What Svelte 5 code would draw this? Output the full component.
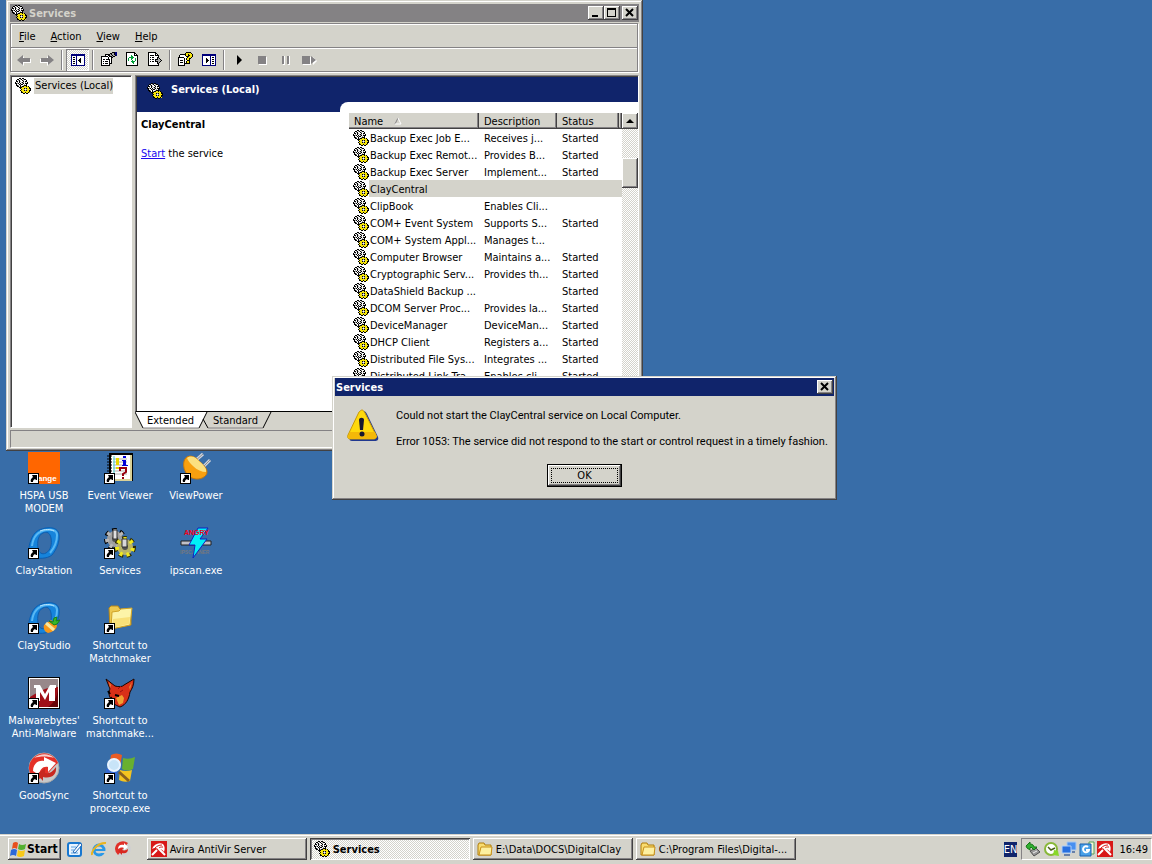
<script>
  const services = [
    ['Backup Exec Job E...', 'Receives j...', 'Started'],
    ['Backup Exec Remot...', 'Provides B...', 'Started'],
    ['Backup Exec Server', 'Implement...', 'Started'],
    ['ClayCentral', '', ''],
    ['ClipBook', 'Enables Cli...', ''],
    ['COM+ Event System', 'Supports S...', 'Started'],
    ['COM+ System Appl...', 'Manages t...', ''],
    ['Computer Browser', 'Maintains a...', 'Started'],
    ['Cryptographic Serv...', 'Provides th...', 'Started'],
    ['DataShield Backup ...', '', 'Started'],
    ['DCOM Server Proc...', 'Provides la...', 'Started'],
    ['DeviceManager', 'DeviceMan...', 'Started'],
    ['DHCP Client', 'Registers a...', 'Started'],
    ['Distributed File Sys...', 'Integrates ...', 'Started'],
    ['Distributed Link Tra...', 'Enables cli...', 'Started'],
  ];

  const menus = ['File', 'Action', 'View', 'Help'];

  const tools = [
    'back', 'forward', '|', 'tree', '|', 'properties', 'refresh', 'export', '|',
    'help', 'pane', '|', 'play', 'stop', 'pause', 'restart',
  ];

  const shortcuts = [
    [
      ['orange', 'HSPA USB MODEM'],
      ['claystation', 'ClayStation'],
      ['claystudio', 'ClayStudio'],
      ['malware', "Malwarebytes' Anti-Malware"],
      ['goodsync', 'GoodSync'],
    ],
    [
      ['events', 'Event Viewer'],
      ['gears', 'Services'],
      ['folder', 'Shortcut to Matchmaker'],
      ['fox', 'Shortcut to matchmake...'],
      ['procexp', 'Shortcut to procexp.exe'],
    ],
    [
      ['plug', 'ViewPower'],
      ['ipscan', 'ipscan.exe'],
    ],
  ];

  const tasks = [
    ['avira', 'Avira AntiVir Server'],
    ['gear', 'Services'],
    ['smallfolder', 'E:\\Data\\DOCS\\DigitalClay'],
    ['smallfolder', 'C:\\Program Files\\Digital-...'],
  ];

  let selected = $state('ClayCentral');
  let dialogOpen = $state(true);

  const palette = { K: '#000', W: '#fff', G: '#a8a8a8', D: '#848284', Y: '#f4e40c', N: '#00007b', E: '#00a038' };

  const pixels = {
    gear: [
      '....KK.KK.......',
      '..KKWGKWGKK.....',
      '.KWGKWWKGWWK....',
      '.KKWKGWWKWKK....',
      'KWGWKWGKGWGWK...',
      'KKGKWKWGKWKKK...',
      '.KWWKGKKWGWK....',
      '.KKGWKWWGKKK....',
      '..KKWKGKKYYKYK..',
      '....KKKYYYYYYYK.',
      '.....KYYYKGKYYKK',
      '......KYYGWGYYYK',
      '.....KYYYKGKYYKK',
      '......KYYYYYYYK.',
      '......KKYYKYYKY.',
      '........KK.KK...',
    ],
    tree: [
      '................',
      '................',
      '.NNNNNNNNNNNNNN.',
      '.NNNNNNNNNNNNNN.',
      '.NWWWWNWWWWWWWN.',
      '.NWKKWNWWWWWWWN.',
      '.NWWWWNWWWKWWWN.',
      '.NWKKWNWWKKWWWN.',
      '.NWWWWNWKKKWWWN.',
      '.NWKKWNWWKKWWWN.',
      '.NWWWWNWWWKWWWN.',
      '.NWKKWNWWWWWWWN.',
      '.NWWWWNWWWWWWWN.',
      '.NNNNNNNNNNNNNN.',
    ],
    pane: [
      '................',
      '................',
      '.NNNNNNNNNNNNNN.',
      '.NNNNNNNNNNNNNN.',
      '.NWWWWWWWNWWWWN.',
      '.NWWWWWWWNWKKWN.',
      '.NWWWKWWWNWWWWN.',
      '.NWWWKKWWNWKKWN.',
      '.NWWWKKKWNWWWWN.',
      '.NWWWKKWWNWKKWN.',
      '.NWWWKWWWNWWWWN.',
      '.NWWWWWWWNWKKWN.',
      '.NWWWWWWWNWWWWN.',
      '.NNNNNNNNNNNNNN.',
    ],
    properties: [
      '...........KKKNN',
      '.........KKGGKNN',
      '....KKKKKGKGGKNN',
      '....KWWKKGGKGGKN',
      'KKKKKKKWKKKGKK..',
      'KWWWWWWKWWKK....',
      'KWWWWWWKWWK.....',
      'KWKKWKKKKWK.....',
      'KWWWWWWWKWK.....',
      'KWKWKKKWKWK.....',
      'KWWWWWWWKWK.....',
      'KWKWKKKWKKK.....',
      'KWWWWWWWK.......',
      'KKKKKKKKK.......',
    ],
    refresh: [
      '..KKKKKKKKK.....',
      '..KWWWWWWWKK....',
      '..KWWWWWWWKWK...',
      '..KWWWWEWWKKKK..',
      '..KWWWWEEWWWWK..',
      '..KWWEEEEEWWWK..',
      '..KWEWWEEWWEWK..',
      '..KWEWWEWWWEWK..',
      '..KWEWWWEWWEWK..',
      '..KWWWWEEEEWWK..',
      '..KWWWWWEEWWWK..',
      '..KWWWWWWEWWWK..',
      '..KWWWWWWWWWWK..',
      '..KKKKKKKKKKKK..',
    ],
    export: [
      '.KKKKKKKK.......',
      '.KWWWWWWKK......',
      '.KWWWWWWKWK.....',
      '.KWKKKKWKKKK....',
      '.KWWWWWWWWWK....',
      '.KWKWKKWWWKK....',
      '.KWWWWWWWWKGK...',
      '.KWKWKKWKKKGGK..',
      '.KWWWWWWKGGGGGK.',
      '.KWKWKKWKKKGGK..',
      '.KWWWWWWWWKGK...',
      '.KWWWWWWWWKK....',
      '.KWWWWWWWWWK....',
      '.KKKKKKKKKKK....',
    ],
    help: [
      '........KKKKK...',
      '.......KYYYYYK..',
      '..KKKKKKYYKYYYK.',
      '.KWWWWWKYYKKYYK.',
      '.KWWWWWWKKKYYYK.',
      'KKKKKKWWWKYYYK..',
      'KWWWWWKWKYYKK...',
      'KWWWWWKWKYYK....',
      'KWKKKWKWWKKK....',
      'KWWWWWKWKYYK....',
      'KWKKKWKWKYYK....',
      'KWWWWWKKKKKK....',
      'KWWWWWK.........',
      'KKKKKKK.........',
    ],
  };

  // one path per colour keeps the pixel icons small
  function layers(name) {
    const out = {};
    pixels[name].forEach((row, y) => {
      [...row].forEach((c, x) => {
        if (c !== '.') out[c] = (out[c] || '') + `M${x} ${y}h1v1h-1z`;
      });
    });
    return Object.entries(out);
  }
</script>

{#snippet small(name)}
  <svg class="small" viewBox="0 0 16 16" aria-hidden="true">
    {#if pixels[name]}
      <g shape-rendering="crispEdges">
        {#each layers(name) as [c, d]}
          <path {d} fill={palette[c]} />
        {/each}
      </g>
    {:else if name === 'back' || name === 'forward'}
      <g transform={name === 'forward' ? 'matrix(-1 0 0 1 16 0)' : undefined}>
        <path d="M3 9l5-5v3h7v4H8v3z" fill="#fff" />
        <path d="M1 8l6-5v3h7v4H7v3z" fill="#848284" />
      </g>
    {:else if name === 'play'}
      <path d="M5 3v10l5-5z" fill="#000" />
    {:else if name === 'stop'}
      <path d="M4 5h8v8H4z" fill="#fff" /><path d="M3 4h8v8H3z" fill="#848284" />
    {:else if name === 'pause'}
      <path d="M5 4h2v9H5zM10 4h2v9h-2z" fill="#fff" /><path d="M4 4h2v8H4zM9 4h2v8H9z" fill="#848284" />
    {:else if name === 'restart'}
      <path d="M2 5h8v8H2zM12 5v8l4-4z" fill="#fff" /><path d="M1 4h8v8H1zM10 4v8l5-4z" fill="#848284" />
    {:else if name === 'avira'}
      <path d="M0 0h16v16H0z" fill="#d81818" />
      <path d="M1 8C3 3 8 1 12 3c2 2 2 5 1 8-1-2-3-3-5-3s-3-2-7 0z" fill="#fff" />
      <path d="M7 7l7 7M1 14l5-5" stroke="#fff" stroke-width="2" fill="none" />
      <path d="M4 7c2-2 4-3 7-3M8 7c1-1 2-1 4-1" stroke="#d81818" fill="none" />
    {:else if name === 'smallfolder'}
      <path d="M1 4l1-2h5l1 2h6v10H1z" fill="#f8dc70" stroke="#b07c08" />
      <path d="M2 14l2-8h11l-1 8z" fill="#fdf0a0" stroke="#c89018" />
    {:else if name === 'flag'}
      <path d="M3 2q3-2 5 0l-1 6q-3-2-5 0z" fill="#e8501c" />
      <path d="M9 3q3 2 7 0l-1 5q-4 2-7 0z" fill="#54b030" />
      <path d="M1 9q3-2 6 0l-1 6q-3-2-6 0z" fill="#2c68d8" />
      <path d="M8 9q3 2 7 0l-1 6q-4 2-7 0z" fill="#f8c818" />
    {:else if name === 'desktop'}
      <rect x="1" y="2" width="13" height="13" rx="2" fill="#e8f4ff" stroke="#1878d0" stroke-width="2" />
      <path d="M4 6h5M4 9h3M4 12h7" stroke="#58a0e0" />
      <path d="M6 11l7-9 2 2-7 8z" fill="#f4faff" stroke="#2068b8" />
    {:else if name === 'ie'}
      <circle cx="8" cy="9" r="5" fill="none" stroke="#2898e8" stroke-width="3" />
      <path d="M4 9h9" stroke="#2898e8" stroke-width="2" />
      <path d="M10 10h5v2h-5z" fill="#d4d3cb" />
      <path d="M1 14C0 9 8 1 15 2" stroke="#e8b420" stroke-width="2" fill="none" />
    {:else if name === 'sync'}
      <circle cx="8" cy="8" r="8" fill="#d0d0d0" />
      <path d="M0 8a8 8 0 0 1 13-6L3 14a8 8 0 0 1-3-6z" fill="#e03028" />
      <path d="M3 8c0-4 3-5 6-4V2l4 4-4 3V7C6 6 5 7 3 8z" fill="#fff" />
      <path d="M13 8c0 4-3 5-6 4v2l-4-4 4-3v2c3 1 4 0 6-1z" fill="#d82820" />
    {:else if name === 'usb'}
      <path d="M5 10l6-3 4 4-6 4z" fill="#989898" stroke="#505050" />
      <path d="M8 12l4-2" stroke="#eee" />
      <path d="M1 5l4-4v2c3 0 4 2 4 3h3l-3 3-3-3-1 1v2L2 7z" fill="#30b030" stroke="#187818" />
    {:else if name === 'clock'}
      <circle cx="8" cy="8" r="6" fill="#fff" stroke="#88b838" stroke-width="2" />
      <path d="M5 6l3 3 4-2" stroke="#486018" fill="none" stroke-width="1.5" />
      <path d="M11 9l4 1 1 5-6-1z" fill="#88d828" />
    {:else if name === 'network'}
      <path d="M6 1h9v8H6z" fill="#4890f0" stroke="#a8c8f0" /><path d="M1 5h9v7H1z" fill="#2870e0" stroke="#b0d0f8" />
      <path d="M3 14h6M11 11h3" stroke="#6880a8" stroke-width="2" />
    {:else if name === 'update'}
      <path d="M10 1h5v12h-5z" fill="#f4f4d8" stroke="#58a058" /><path d="M1 3h11v12H1z" fill="#48a0e8" stroke="#1860b0" />
      <path d="M9 6a3 3 0 1 0 1 3H7" fill="none" stroke="#fff" stroke-width="2" />
    {/if}
  </svg>
{/snippet}

{#snippet ring()}
  <path
    d="M14 2C22-1 30 1 31 7c1 7-2 15-7 21-5 4-14 4-19 2C0 27 0 20 3 13 5 7 9 3 14 2zM15 6c-5 2-6 9-5 15 1 5 4 7 8 5 5-3 6-9 5-15-1-5-4-7-8-5z"
    fill="#1684dc" fill-rule="evenodd" stroke="#0c5eb0" />
  <path d="M4 19C5 10 10 4 19 3c6-1 10 1 10 5 0 6-2 12-7 18" stroke="#58b8f4" stroke-width="2" fill="none" />
  <path d="M12 4c5-2 10-2 14 0" stroke="#b8e4fc" fill="none" />
{/snippet}

{#snippet big(name)}
  <svg class="big" viewBox="0 0 32 32" aria-hidden="true">
    {#if name === 'orange'}
      <path d="M0 0h32v32H0z" fill="#ff6600" />
      <text x="10" y="29" class="orange-mark">ange</text>
    {:else if name === 'claystation'}
      {@render ring()}
    {:else if name === 'claystudio'}
      {@render ring()}
      <path d="M16 23l7-5 6 5c0 4-4 7-9 8-3-1-5-4-4-8z" fill="#f89818" />
      <path d="M18 21l8 7" stroke="#f8e8a0" stroke-width="3" />
      <path d="M21 19l4 1 1-4 3-1-1 4 4-1-3 4-3 1z" fill="#38b828" stroke="#188018" />
    {:else if name === 'malware'}
      <path d="M0 0h32v32H0z" fill="#000" />
      <path d="M1 1h30v30H1z" fill="#fff" />
      <path d="M2 2h28v28H2z" fill="#a01018" />
      <path d="M2 2h28v8C18 10 12 14 2 20z" fill="#98888a" />
      <path d="M20 30c6-4 9-10 10-18v18z" fill="#680408" />
      <path d="M6 8h6l5 9 5-9h6v3h-1v13h-6v-9l-4 8-5-8v9H8V11H6z" fill="#fff" />
    {:else if name === 'goodsync'}
      <circle cx="16" cy="16" r="15" fill="#c8c8c8" stroke="#a8a8a8" />
      <path d="M1 17A15 15 0 0 1 30 11C24 15 20 25 8 28A15 15 0 0 1 1 17z" fill="#e43028" />
      <path d="M6 6c6-5 15-5 20 0-6-2-14-2-20 0z" fill="#f8d0cc" />
      <path d="M5 19c0-7 5-11 11-10V5l12 6-8 9v-5c-5-1-8 2-9 8z" fill="#fff" />
      <path d="M28 15c1 8-5 12-13 10v4l-6-7 8-6v5c5 1 8-2 11-6z" fill="#c82820" />
    {:else if name === 'events'}
      <path d="M6 2h22v26H6z" fill="#fff" stroke="#000" stroke-width="2" />
      <path d="M27 3v25H8" stroke="#d8d098" stroke-width="2" fill="none" />
      <path d="M9 7h14M9 10h14M9 13h14M9 16h14M9 19h14M9 22h14" stroke="#b0b0b0" />
      <path d="M10 4v22" stroke="#40d0d0" />
      <path d="M3 4h5M3 7h5M3 10h5M3 13h5M3 16h5M3 19h5" stroke="#000" />
      <path d="M12 6h3v7h-3zM12 15h3v2h-3z" fill="#e8d800" />
      <path d="M19 4h3v2h-3zM18 8h4v5h2v1h-6v-1h1v-4h-1z" fill="#0000d8" />
      <path d="M16 19v-3h6v4l-3 2v2M19 25v2" stroke="#980010" stroke-width="2" fill="none" />
    {:else if name === 'gears'}
      <circle cx="11" cy="12" r="8" fill="none" stroke="#000" stroke-width="6" stroke-dasharray="4 3" />
      <circle cx="11" cy="12" r="8" fill="#a0a0a0" stroke="#b8b8b8" stroke-width="4" stroke-dasharray="3 4" stroke-dashoffset="-1" />
      <circle cx="11" cy="12" r="3" fill="#505050" />
      <path d="M9 3h4v9H9z" fill="#e0e0e0" stroke="#303030" />
      <circle cx="21" cy="20" r="8" fill="none" stroke="#302c00" stroke-width="6" stroke-dasharray="4 3" />
      <circle cx="21" cy="20" r="8" fill="#b8b468" stroke="#f0e820" stroke-width="4" stroke-dasharray="3 4" stroke-dashoffset="-1" />
      <circle cx="21" cy="20" r="3" fill="#505050" />
      <path d="M18 12h5v8h-5z" fill="#d8d8d8" stroke="#303030" />
    {:else if name === 'folder'}
      <path d="M5 6l2-2h7l2 3h9l2 2v14L6 27z" fill="#ecc850" stroke="#b88818" />
      <path d="M8 10l7-1 2-2 11-1-2 17-19 4z" fill="#fdf4a8" stroke="#d0a428" />
      <path d="M9 17l17-2-1 7-17 4z" fill="#f8e078" />
    {:else if name === 'fox'}
      <path d="M2 2l9 7c4 1 7 1 9-1l10-6c0 6-2 10-4 13-1 7-4 13-10 15-5-2-8-4-9-8-3-4-2-8-1-10z" fill="#d83018" stroke="#180400" />
      <path d="M28 5l-3 5 1 3zM5 5l1 6 1-3z" fill="#e88030" />
      <path d="M12 21l6-3 2 3-1 5-4 2z" fill="#f0a030" />
      <path d="M11 18l4 1M4 14l2 3M7 20l1 4" stroke="#000" stroke-width="2" />
      <path d="M14 12l3-3M16 15l3-2" stroke="#981010" />
    {:else if name === 'procexp'}
      <path d="M7 3q5-3 11 0l-2 12q-6-3-11 0z" fill="#e85c24" />
      <path d="M19 6q6 2 12-1l-2 12q-6 3-11 0z" fill="#68b030" />
      <path d="M2 17q6-2 12 0l-2 11q-5-3-11 0z" fill="#3468d0" />
      <path d="M16 18q6 2 12 0l-2 11q-6 2-11-1z" fill="#f4c420" />
      <path d="M15 20l10 9" stroke="#886020" stroke-width="3" />
      <circle cx="10" cy="13" r="6" fill="#c8e4f8" stroke="#e8f4ff" stroke-width="2" />
    {:else if name === 'plug'}
      <path d="M15 9l8-7M23 15l7-7" stroke="#d0d4dc" stroke-width="3" />
      <path d="M15 9l8-7M23 15l7-7" stroke="#888c94" />
      <path d="M5 7c3-5 10-3 14 2 6 5 10 10 7 14-4 5-11 5-16 2C4 21 2 12 5 7z" fill="#f8a010" stroke="#c87808" />
      <path d="M7 6c4-3 9-1 12 3 5 4 8 8 7 11-4 0-9-2-13-6-3-3-5-5-6-8z" fill="#fbe080" />
    {:else if name === 'ipscan'}
      <path d="M1 14h30v4H1z" fill="#c0c0c8" stroke="#202020" />
      <text x="0" y="27" class="scanner">IPSCANNER</text>
      <path d="M18 1h10l-8 11h7L13 31l2-13H9z" fill="#00f0f8" stroke="#1020c0" />
      <text x="4" y="8" class="angry">ANGRY</text>
    {/if}
    {#if name !== 'ipscan'}
      <path d="M0 21h11v11H0z" fill="#000" /><path d="M1 22h9v9H1z" fill="#fff" />
      <path d="M4 23h5v5H8l-1-1c-2 1-2 2-2 3H3c-1-2 0-3 2-5z" fill="#000" />
    {/if}
  </svg>
{/snippet}

{#snippet closeMark()}
  <svg class="mark" viewBox="0 0 12 10" aria-hidden="true">
    <path d="M2 1l7 7M9 1L2 8" stroke="#000" stroke-width="2" />
  </svg>
{/snippet}

<div class="screen">
  <main class="desktop">
    <div class="shortcuts">
      {#each shortcuts as column}
        <div class="column">
          {#each column as [icon, label]}
            <a class="shortcut" href="#{icon}">
              {@render big(icon)}
              <span>{label}</span>
            </a>
          {/each}
        </div>
      {/each}
    </div>

    <section class="window services" aria-label="Services">
      <header class="title inactive">
        {@render small('gear')}
        <h1>Services</h1>
        <button class="caption" aria-label="Minimize">
          <svg class="mark" viewBox="0 0 12 10" aria-hidden="true"><path d="M2 7h6v2H2z" /></svg>
        </button>
        <button class="caption" aria-label="Maximize">
          <svg class="mark" viewBox="0 0 12 10" aria-hidden="true"><path d="M1 0h9v9H1zM2 2v6h7V2z" fill-rule="evenodd" /></svg>
        </button>
        <button class="caption close" aria-label="Close">{@render closeMark()}</button>
      </header>

      <div class="bars">
        <nav class="menu">
          {#each menus as menu}
            <button><u>{menu[0]}</u>{menu.slice(1)}</button>
          {/each}
        </nav>
        <div class="toolbar">
          {#each tools as tool}
            {#if tool === '|'}
              <span class="separator"></span>
            {:else}
              <button class:pressed={tool === 'tree'} aria-label={tool}>{@render small(tool)}</button>
            {/if}
          {/each}
        </div>
      </div>

      <div class="panes">
        <div class="sunken tree">
          {@render small('gear')}
          <button>Services (Local)</button>
        </div>

        <div class="result">
          <div class="sunken view">
            <h2>{@render small('gear')} Services (Local)</h2>
            <div class="split">
              <div class="detail">
                <h3>{selected}</h3>
                <p><a href="#start">Start</a> the service</p>
              </div>
              <div class="list">
                <table>
                  <colgroup><col class="name" /><col class="description" /><col class="status" /><col /></colgroup>
                  <thead>
                    <tr>
                      <th>Name
                        <svg class="sort" viewBox="0 0 8 8" aria-hidden="true">
                          <path d="M4 1L1 7" stroke="#848284" /><path d="M4 1l3 6H1" stroke="#fff" fill="none" />
                        </svg>
                      </th>
                      <th>Description</th>
                      <th>Status</th>
                      <th class="rest"></th>
                    </tr>
                  </thead>
                  <tbody>
                    {#each services as [name, description, status]}
                      <tr class:selected={name === selected} onclick={() => (selected = name)}>
                        <td><span class="cell">{@render small('gear')}<span>{name}</span></span></td>
                        <td>{description}</td>
                        <td>{status}</td>
                        <td class="rest"></td>
                      </tr>
                    {/each}
                  </tbody>
                </table>
                <div class="scrollbar">
                  <button class="up" aria-label="Scroll up">
                    <svg viewBox="0 0 8 8" aria-hidden="true"><path d="M0 6h8L4 2z" /></svg>
                  </button>
                  <div class="thumb"></div>
                </div>
              </div>
            </div>
          </div>
          <div class="tabs">
            <svg viewBox="0 0 140 17" aria-hidden="true">
              <path d="M68 7l5 9h55l8-16H72z" fill="#d4d3cb" />
              <path d="M0 0l8 16h56l8-16z" fill="#fff" />
              <path d="M0 0l8 16M64 16l8-16M68 7l5 9M128 16l8-16" stroke="#000" fill="none" />
              <path d="M8 16h56M73 16h55" stroke="#848284" />
            </svg>
            <button>Extended</button>
            <button>Standard</button>
          </div>
        </div>
      </div>
      <footer class="statusbar"></footer>
    </section>

    {#if dialogOpen}
      <div class="window dialog" role="alertdialog" aria-label="Services">
        <header class="title">
          <h1>Services</h1>
          <button class="caption close" aria-label="Close" onclick={() => (dialogOpen = false)}>{@render closeMark()}</button>
        </header>
        <div class="message">
          <svg class="warning" viewBox="0 0 32 32" aria-hidden="true">
            <path d="M16 2c2 0 3 1 4 3l11 23c1 3-1 4-3 4H5c-2 0-3-1-2-3z" fill="#203890" />
            <path d="M15 1c1 0 2 1 3 3l11 22c1 2 0 4-2 4H3c-2 0-3-2-2-4L12 3c1-1 2-2 3-2z" fill="#ffd90c" stroke="#c89808" />
            <path d="M3 23h25l2 5-3 2H3l-2-2z" fill="#f4b808" />
            <path d="M12 11c0-3 5-3 5 0l-1 10h-3z" fill="#181830" />
            <circle cx="15" cy="25" r="2.500" fill="#181830" />
          </svg>
          <div>
            <p>Could not start the ClayCentral service on Local Computer.</p>
            <p>Error 1053: The service did not respond to the start or control request in a timely fashion.</p>
          </div>
        </div>
        <button class="ok" onclick={() => (dialogOpen = false)}><span>OK</span></button>
      </div>
    {/if}
  </main>

  <footer class="taskbar">
    <button class="start">{@render small('flag')}Start</button>
    <div class="quick">
      <button aria-label="Show desktop">{@render small('desktop')}</button>
      <button aria-label="Internet Explorer">{@render small('ie')}</button>
      <button aria-label="GoodSync">{@render small('sync')}</button>
    </div>
    <div class="tasks">
      {#each tasks as [icon, label]}
        <button class:active={label === 'Services'}>{@render small(icon)}<span>{label}</span></button>
      {/each}
    </div>
    <span class="language">EN</span>
    <div class="tray">
      {#each ['usb', 'clock', 'network', 'update', 'avira'] as icon}
        {@render small(icon)}
      {/each}
      <time>16:49</time>
    </div>
  </footer>
</div>

<style>
  :global(body) {
    --face: #d4d3cb;
    --shade: #848284;
    --dark: #424142;
    --navy: #10246b;
    --dither: repeating-conic-gradient(#fff 0 25%, var(--face) 0 50%) 0 0 / 2px 2px;
    margin: 0;
    color: #000;
    font: 11px/13px Tahoma, 'DejaVu Sans Condensed', sans-serif;
  }

  .screen {
    display: flex;
    flex-direction: column;
    min-height: 100vh;
    overflow: hidden;
  }

  .desktop {
    position: relative;
    flex: 1;
    background: #386da8;
  }

  h1,
  h2,
  h3,
  p {
    margin: 0;
    font-size: 11px;
  }

  button {
    margin: 0;
    padding: 0;
    border: 0;
    background: none;
    color: inherit;
    font: inherit;
  }

  .small {
    flex: none;
    width: 16px;
    height: 16px;
  }

  /* desktop shortcuts */
  .shortcuts {
    display: flex;
    padding: 452px 0 0 6px;
  }

  .column {
    width: 76px;
  }

  .shortcut {
    display: flex;
    flex-direction: column;
    align-items: center;
    gap: 5px;
    height: 75px;
    color: #fff;
    text-align: center;
    text-decoration: none;
  }

  .big {
    flex: none;
    width: 32px;
    height: 32px;
  }

  .orange-mark {
    fill: #fff;
    font: bold 8px 'Liberation Sans', sans-serif;
  }

  .angry,
  .scanner {
    fill: #f00018;
    font: bold 7px 'Liberation Sans', sans-serif;
  }

  .scanner {
    fill: #747880;
    font-size: 5px;
  }

  /* window frame */
  .window {
    position: absolute;
    display: flex;
    flex-direction: column;
    background: var(--face);
    box-shadow:
      inset -1px -1px var(--dark),
      inset 1px 1px var(--face),
      inset -2px -2px var(--shade),
      inset 2px 2px #fff;
  }

  .services {
    top: 0;
    left: 6px;
    box-sizing: border-box;
    width: calc(50vw + 61px);
    height: calc(50vh + 19px);
    padding: 4px 4px 3px;
  }

  .title {
    display: flex;
    align-items: center;
    height: 18px;
    padding: 0 1px;
    background: var(--navy);
    color: #fff;
  }

  .title.inactive {
    background: var(--shade);
    color: var(--face);
  }

  .title h1 {
    flex: 1;
  }

  .inactive h1 {
    padding-left: 2px;
  }

  .caption,
  .up,
  .thumb,
  .start,
  .tasks button {
    background: var(--face);
    box-shadow:
      inset -1px -1px var(--dark),
      inset 1px 1px #fff,
      inset -2px -2px var(--shade);
  }

  .caption {
    width: 16px;
    height: 14px;
  }

  .services .close {
    margin-left: 2px;
  }

  .mark {
    display: block;
    width: 12px;
    height: 10px;
    margin: 0 auto;
  }

  .bars {
    margin: 1px 1px 3px 0;
    border: 1px solid var(--shade);
    box-shadow:
      inset 1px 1px #fff,
      1px 1px #fff;
  }

  .menu {
    display: flex;
    align-items: center;
    gap: 15px;
    height: 22px;
    padding: 1px 0 0 8px;
    border-bottom: 1px solid var(--shade);
  }

  .toolbar {
    display: flex;
    height: 22px;
    padding: 0 1px;
    border-top: 1px solid #fff;
  }

  .toolbar button {
    display: grid;
    place-items: center;
    width: 23px;
  }

  .toolbar .pressed {
    background: var(--dither);
    box-shadow:
      inset 1px 1px var(--shade),
      inset -1px -1px #fff;
  }

  .separator {
    margin: 1px 3px;
    border-left: 1px solid var(--shade);
    border-right: 1px solid #fff;
  }

  .panes {
    display: flex;
    flex: 1;
    gap: 3px;
    min-height: 0;
  }

  .sunken {
    border: 1px solid;
    border-color: var(--shade) #fff #fff var(--shade);
    background: #fff;
    box-shadow: inset 1px 1px var(--dark);
  }

  .tree {
    display: flex;
    align-items: flex-start;
    gap: 3px;
    width: 116px;
    padding: 2px 0 0 4px;
  }

  .tree button {
    padding: 1px 0 2px 1px;
    background: var(--face);
  }

  .result {
    display: flex;
    flex: 1;
    flex-direction: column;
    min-width: 0;
  }

  .view {
    display: flex;
    flex: 1;
    flex-direction: column;
    min-height: 0;
    padding: 1px 0 0 1px;
    border-bottom-color: #000;
  }

  .view h2 {
    display: flex;
    flex: none;
    gap: 8px;
    height: 29px;
    padding: 6px 0 0 10px;
    background: var(--navy);
    color: #fff;
  }

  .split {
    display: flex;
    flex: 1;
    min-height: 0;
  }

  .detail {
    width: 203px;
    box-sizing: border-box;
    padding: 6px 4px;
  }

  .detail p {
    margin-top: 16px;
  }

  .detail a {
    color: #2008f0;
  }

  .list {
    display: flex;
    flex: 1;
    align-items: flex-start;
    margin-top: -10px;
    padding: 11px 0 0 9px;
    border-radius: 8px 0 0 0;
    background: #fff;
    overflow: hidden;
  }

  table {
    width: calc(100% - 16px);
    border-collapse: collapse;
    table-layout: fixed;
    white-space: nowrap;
  }

  .name {
    width: 130px;
  }

  .description {
    width: 78px;
  }

  .status {
    width: 62px;
  }

  th {
    height: 16px;
    padding: 0 0 0 5px;
    background: var(--face);
    box-shadow:
      inset -1px -1px var(--dark),
      inset -2px -2px var(--shade);
    font-weight: normal;
    text-align: left;
  }

  .sort {
    width: 8px;
    height: 8px;
    margin-left: 8px;
  }

  td {
    height: 16px;
    padding: 1px 0 0 5px;
  }

  td:first-child {
    padding: 0 0 0 4px;
  }

  .rest {
    padding: 0;
  }

  .cell {
    display: flex;
    align-items: center;
    height: 17px;
  }

  .cell span {
    flex: 1;
    padding: 3px 0 1px 1px;
  }

  .selected td:not(:first-child),
  .selected .cell span {
    background: var(--face);
  }

  .scrollbar {
    flex: none;
    width: 16px;
    align-self: stretch;
    background: var(--dither);
  }

  .up {
    display: grid;
    place-items: center;
    width: 16px;
    height: 16px;
  }

  .up svg {
    width: 8px;
    height: 8px;
  }

  .thumb {
    height: 30px;
    margin-top: 29px;
  }

  .tabs {
    position: relative;
    display: flex;
    gap: 19px;
    height: 16px;
    padding-left: 12px;
  }

  .tabs svg {
    position: absolute;
    top: 0;
    left: 0;
    width: 140px;
    height: 17px;
  }

  .tabs button {
    position: relative;
  }

  .statusbar {
    height: 16px;
    margin: 2px 1px 0 0;
    border: 1px solid;
    border-color: var(--shade) #fff #fff var(--shade);
  }

  /* error message */
  .dialog {
    top: 376px;
    left: 332px;
    min-width: 499px;
    padding: 2px 3px 13px;
  }

  .message {
    display: flex;
    gap: 17px;
    padding: 13px 6px 0 12px;
    font-family: Tahoma, Roboto, sans-serif;
  }

  .message p + p {
    margin-top: 13px;
  }

  .warning {
    flex: none;
    width: 32px;
    height: 32px;
  }

  .ok {
    align-self: center;
    width: 75px;
    height: 23px;
    margin-top: 16px;
    padding: 3px;
    border: 1px solid #000;
    box-shadow:
      inset -1px -1px var(--dark),
      inset 1px 1px #fff,
      inset -2px -2px var(--shade);
  }

  .ok span {
    display: block;
    border: 1px dotted #000;
  }

  /* taskbar */
  .taskbar {
    display: flex;
    align-items: center;
    box-sizing: border-box;
    height: 30px;
    padding: 0 0 1px 8px;
    border-top: 1px solid var(--face);
    background: var(--face);
    box-shadow: inset 0 1px #fff;
  }

  .start {
    display: flex;
    align-items: center;
    gap: 1px;
    height: 22px;
    padding: 0 3px 0 2px;
    font-size: 12px;
    font-weight: bold;
  }

  .quick {
    display: flex;
    gap: 8px;
    padding: 0 16px 0 6px;
  }

  .quick button {
    height: 16px;
  }

  .tasks {
    display: flex;
    flex: 1;
    gap: 3px;
    min-width: 0;
  }

  .tasks button {
    display: flex;
    align-items: center;
    gap: 3px;
    width: 160px;
    height: 22px;
    padding: 0 4px;
    white-space: nowrap;
  }

  .tasks .active {
    background: var(--dither);
    box-shadow:
      inset 1px 1px var(--dark),
      inset -1px -1px #fff,
      inset 2px 2px var(--shade);
    font-weight: bold;
  }

  .language {
    padding: 1px 0;
    margin-right: 4px;
    background: var(--navy);
    color: #fff;
  }

  .tray {
    display: flex;
    align-items: center;
    gap: 2px;
    height: 20px;
    padding: 0 3px;
    border: 1px solid;
    border-color: var(--shade) #fff #fff var(--shade);
  }

  time {
    padding-left: 4px;
  }
</style>
